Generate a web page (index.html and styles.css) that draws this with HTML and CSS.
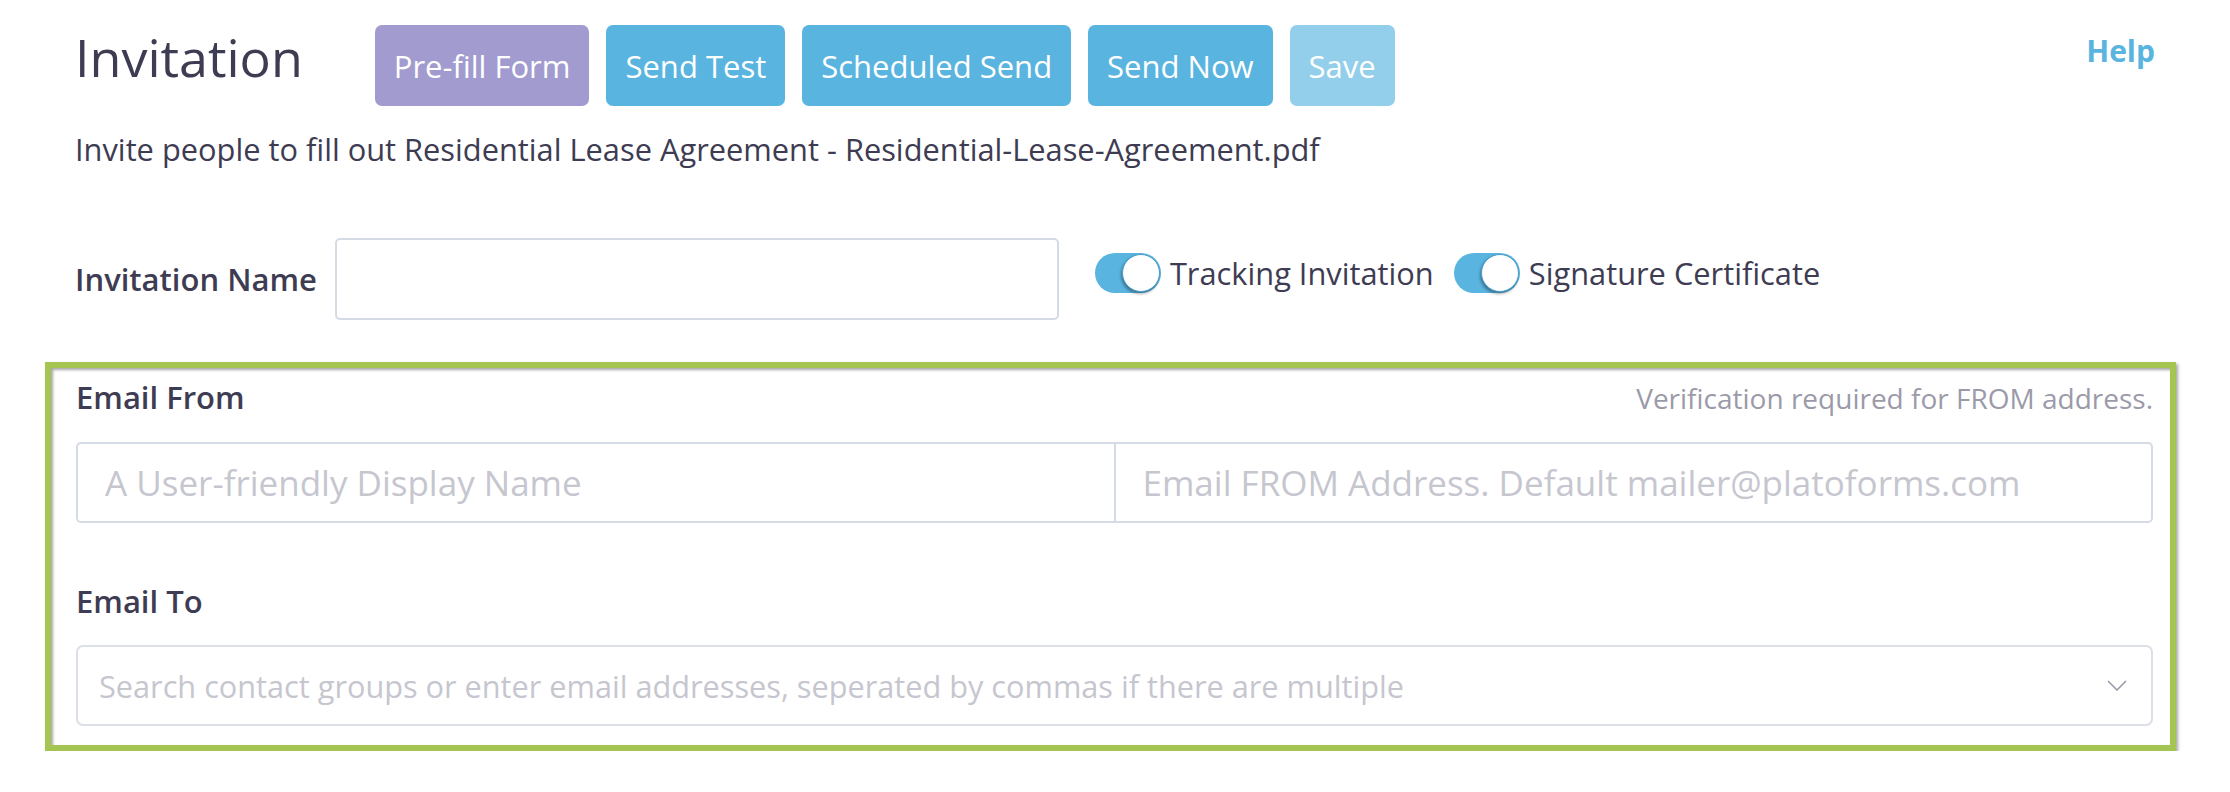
FILE: index.html
```html
<!DOCTYPE html>
<html lang="en">
<head>
<meta charset="utf-8">
<title>Invitation</title>
<link rel="stylesheet" href="styles.css">
</head>
<body>
<div class="page">
  <header class="top">
    <h1 class="title">Invitation</h1>
    <div class="actions">
      <button class="btn btn-purple">Pre-fill Form</button>
      <button class="btn btn-blue">Send Test</button>
      <button class="btn btn-blue">Scheduled Send</button>
      <button class="btn btn-blue">Send Now</button>
      <button class="btn btn-light">Save</button>
    </div>
    <a class="help" href="#">Help</a>
  </header>

  <p class="subtitle">Invite people to fill out Residential Lease Agreement - Residential-Lease-Agreement.pdf</p>

  <div class="name-row">
    <label class="label">Invitation Name</label>
    <input class="text-input name-input" type="text">
    <div class="toggles">
      <div class="toggle"><span class="switch"><span class="knob"></span></span><span class="toggle-text">Tracking Invitation</span></div>
      <div class="toggle"><span class="switch"><span class="knob"></span></span><span class="toggle-text">Signature Certificate</span></div>
    </div>
  </div>

  <section class="email-box">
    <div class="from-head">
      <label class="label">Email From</label>
      <span class="hint">Verification required for FROM address.</span>
    </div>
    <div class="input-group">
      <input class="group-input" type="text" placeholder="A User-friendly Display Name">
      <input class="group-input" type="text" placeholder="Email FROM Address. Default mailer@platoforms.com">
    </div>

    <label class="label to-label">Email To</label>
    <div class="select">
      <span class="select-placeholder">Search contact groups or enter email addresses, seperated by commas if there are multiple</span>
      <svg class="chevron" width="20" height="11" viewBox="0 0 20 11"><polyline points="1,1 10,10 19,1" fill="none" stroke="#9b9aa8" stroke-width="1.6"/></svg>
    </div>
  </section>
</div>
</body>
</html>
```

FILE: styles.css
```css
* { box-sizing: border-box; }

body {
  margin: 0;
  background: #ffffff;
  font-family: "Open Sans", "Noto Sans", sans-serif;
  color: #3e3c52;
}

.page {
  padding: 0 75px;
}

.top {
  display: flex;
  align-items: flex-start;
}

.title {
  margin: 21px 0 0 0;
  font-size: 52px;
  font-weight: 400;
  line-height: normal;
  color: #3e3c52;
}

.actions {
  display: flex;
  gap: 17px;
  margin: 25px 0 0 72px;
}

.btn {
  height: 81px;
  padding: 0 19px;
  border: none;
  border-radius: 7px;
  font-family: "Open Sans", sans-serif;
  font-size: 31px;
  color: #ffffff;
  cursor: pointer;
}

.btn-purple { background: #a29bcf; }
.btn-blue { background: #5ab4e0; }
.btn-light { background: #93ceeb; }

.help {
  margin: 30px 0 0 auto;
  font-size: 30px;
  font-weight: 700;
  color: #5ab4e0;
  text-decoration: none;
}

.subtitle {
  margin: 22px 0 0 0;
  font-size: 30.8px;
  line-height: normal;
}

.name-row {
  display: flex;
  align-items: center;
  margin-top: 68px;
}

.label {
  display: block;
  font-size: 31px;
  font-weight: 600;
  color: #3e3c52;
  line-height: normal;
}

.text-input {
  border: 2px solid #d5dbe5;
  border-radius: 5px;
  background: #fff;
}

.name-input {
  width: 724px;
  height: 82px;
  margin-left: 18px;
}

.toggles {
  display: flex;
  gap: 20px;
  margin-left: 36px;
  margin-bottom: 12px;
}

.toggle {
  display: flex;
  align-items: center;
  gap: 9px;
}

.switch {
  position: relative;
  display: block;
  width: 66px;
  height: 40px;
  border-radius: 20px;
  background: #5ab4e0;
}

.knob {
  position: absolute;
  right: 1px;
  top: 1px;
  width: 38px;
  height: 38px;
  border-radius: 50%;
  background: #ffffff;
  border: 1px solid #4b9ccc;
  box-shadow: -1px 2px 3px rgba(0, 0, 0, 0.35);
}

.toggle-text {
  font-size: 30.8px;
  color: #3e3c52;
}

.email-box {
  margin: 42px -21px 0 -30px;
  border: 6px solid #a5c552;
  box-shadow: 2px 2px 3px rgba(0, 0, 0, 0.35), inset 2px 2px 3px rgba(0, 0, 0, 0.35);
  padding: 8px 17px 19px 25px;
}

.from-head {
  display: flex;
  justify-content: space-between;
  align-items: baseline;
}

.hint {
  font-size: 28px;
  color: #9b9aa9;
}

.input-group {
  display: flex;
  margin-top: 24px;
}

.group-input {
  flex: 1;
  height: 81px;
  border: 2px solid #d5dbe5;
  padding: 0 27px;
  font-family: "Open Sans", sans-serif;
  font-size: 35px;
  color: #3e3c52;
  background: #fff;
}

.group-input:first-child {
  border-radius: 5px 0 0 5px;
}

.group-input:last-child {
  border-left: none;
  border-radius: 0 5px 5px 0;
}

.group-input::placeholder {
  color: #c6c6cf;
}

.to-label {
  margin-top: 57px;
}

.select {
  display: flex;
  align-items: center;
  justify-content: space-between;
  height: 81px;
  margin-top: 23px;
  padding: 0 24px 0 21px;
  border: 2px solid #dcdfe6;
  border-radius: 7px;
}

.select-placeholder {
  font-size: 30.7px;
  color: #c6c6cf;
}

.chevron {
  display: block;
}
```
